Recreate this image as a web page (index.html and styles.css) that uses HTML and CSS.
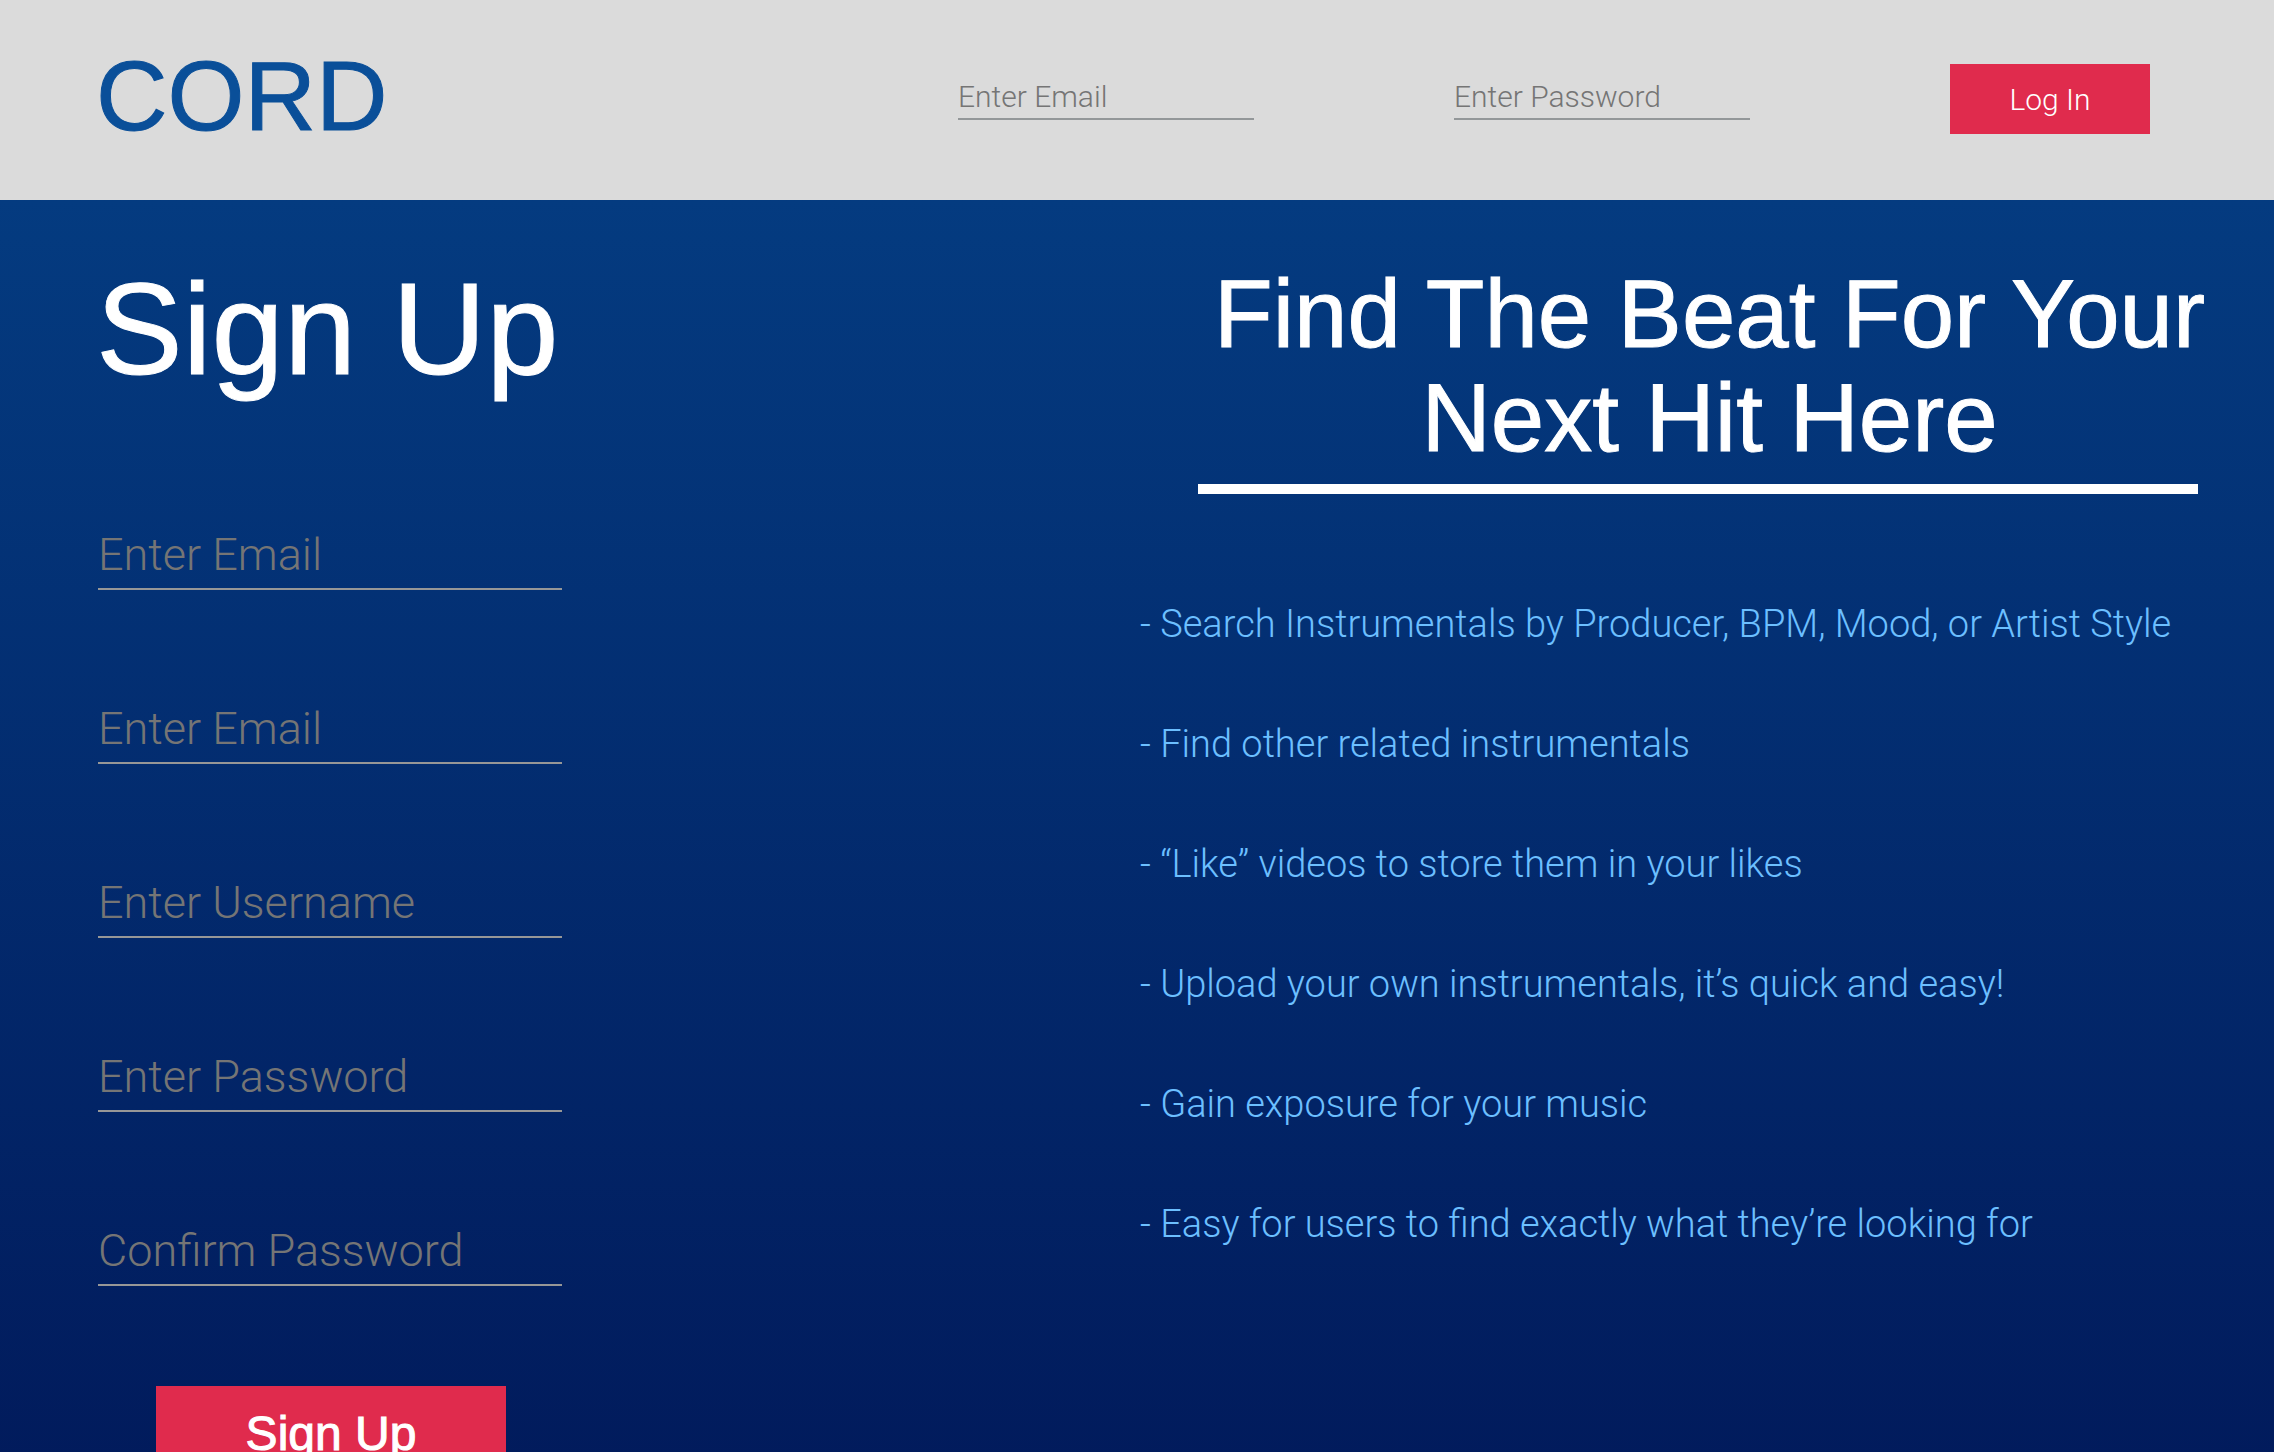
FILE: index.html
```html
<!DOCTYPE html>
<html lang="en">
<head>
  <meta charset="utf-8">
  <meta name="viewport" content="width=device-width, initial-scale=1">
  <title>CORD</title>
  <link rel="stylesheet" href="styles.css">
</head>
<body>
  <header class="topbar">
    <div class="logo">CORD</div>
    <form class="login">
      <input class="field field-small" type="email" placeholder="Enter Email" aria-label="Enter Email">
      <input class="field field-small" type="password" placeholder="Enter Password" aria-label="Enter Password">
      <button class="button login-button" type="submit">Log In</button>
    </form>
  </header>

  <main class="main">
    <section class="signup">
      <h1 class="signup-title">Sign Up</h1>
      <form class="signup-form">
        <input class="field" type="email" placeholder="Enter Email" aria-label="Enter Email">
        <input class="field" type="email" placeholder="Enter Email" aria-label="Enter Email again">
        <input class="field" type="text" placeholder="Enter Username" aria-label="Enter Username">
        <input class="field" type="password" placeholder="Enter Password" aria-label="Enter Password">
        <input class="field" type="password" placeholder="Confirm Password" aria-label="Confirm Password">
        <button class="button signup-button" type="submit">Sign Up</button>
      </form>
    </section>

    <section class="intro">
      <h2 class="intro-title">Find The Beat For Your Next Hit Here</h2>
      <hr class="rule">
      <ul class="features">
        <li>- Search Instrumentals by Producer, BPM, Mood, or Artist Style</li>
        <li>- Find other related instrumentals</li>
        <li>- “Like” videos to store them in your likes</li>
        <li>- Upload your own instrumentals, it’s quick and easy!</li>
        <li>- Gain exposure for your music</li>
        <li>- Easy for users to find exactly what they’re looking for</li>
      </ul>
    </section>
  </main>
</body>
</html>
```
FILE: styles.css
```css
* {
  box-sizing: border-box;
}

body {
  margin: 0;
  background: #01195a;
  color: #fff;
  font-family: "Liberation Sans", Arial, sans-serif;
}

/* Top bar */
.topbar {
  display: flex;
  align-items: center;
  justify-content: space-between;
  padding: 46px 124px 48px 96px;
  background: #dbdbdb;
}

.logo {
  padding-bottom: 6px;
  color: #0a4f99;
  font-size: 99px;
  line-height: 100px;
  -webkit-text-stroke: 1px #0a4f99;
}

.login {
  display: flex;
  align-items: center;
  gap: 200px;
}

/* Controls */
.field {
  width: 100%;
  height: 64px;
  padding: 0 0 6px;
  border: 0;
  border-bottom: 2px solid #979797;
  border-radius: 0;
  outline: 0;
  background: transparent;
  color: #fff;
  font-family: Roboto, sans-serif;
  font-size: 45px;
  font-weight: 300;
}

.field::placeholder {
  color: #757575;
  opacity: 1;
}

.field-small {
  width: 296px;
  height: 42px;
  padding-bottom: 4px;
  color: #333;
  border-bottom-color: #939799;
  font-size: 30px;
}

.button {
  padding: 0;
  border: 0;
  background: #e02b4d;
  color: #fff;
  cursor: pointer;
}

.login-button {
  width: 200px;
  height: 70px;
  font-family: Roboto, sans-serif;
  font-size: 30px;
  font-weight: 300;
}

.signup-button {
  width: 350px;
  height: 94px;
  margin: -10px 0 0 58px;
  font-family: "Liberation Sans", Arial, sans-serif;
  font-size: 48px;
  -webkit-text-stroke: 1px #fff;
}

/* Main area */
.main {
  display: grid;
  grid-template-columns: 1fr 1fr;
  padding: 54px 0 56px;
  background: linear-gradient(#043b80, #01195a);
}

.signup {
  padding-left: 96px;
}

.signup-title {
  margin: 0 0 122px;
  font-size: 130px;
  font-weight: 400;
  line-height: 150px;
  -webkit-text-stroke: 1px #fff;
}

.signup-form {
  display: flex;
  flex-direction: column;
  max-width: 464px;
  margin-left: 2px;
  gap: 110px;
}

.intro {
  padding-top: 8px;
}

.intro-title {
  margin: 0 52px 14px 60px;
  font-size: 96px;
  font-weight: 400;
  line-height: 104px;
  text-align: center;
  -webkit-text-stroke: 1px #fff;
}

.rule {
  max-width: 1000px;
  height: 10px;
  margin: 0 0 70px 61px;
  border: 0;
  background: #fff;
}

.features {
  margin: 0;
  padding: 0 0 0 3px;
  color: #6cbfff;
  font-family: Roboto, sans-serif;
  font-size: 38px;
  font-weight: 300;
  line-height: 120px;
  list-style: none;
}
```
